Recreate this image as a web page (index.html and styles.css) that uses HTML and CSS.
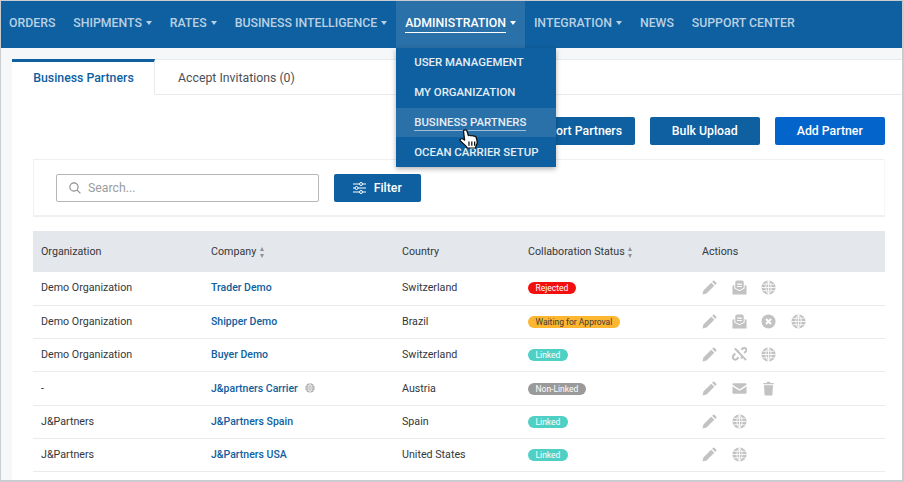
FILE: index.html
```html
<!DOCTYPE html>
<html>

<head>
    <title>Business Partners</title>
    <meta charset="utf-8">
    <link rel="stylesheet" href="styles.css">
</head>

<body>
    <svg class="icon-defs" width="0" height="0">
        <symbol id="i-pencil" viewBox="0 0 16 16">
            <path d="M0.5 15.5l1-4.3 8.3-8.3 3.3 3.3-8.3 8.3zM10.8 1.900l1.200-1.200q.6-.5 1.200 0l2.100 2.100q.5.6 0 1.200l-1.200 1.200z" />
        </symbol>
        <symbol id="i-open-mail" viewBox="0 0 16 16">
            <path d="M0.500 6.500l2-1.400v3.900l5.500 3 5.500-3v-3.900l2 1.400v9h-15z" />
            <path d="M3.500 2.500q0-2 2-2h5q2 0 2 2v6l-4.500 2.500-4.500-2.500zM5.500 3.800v1.200h5v-1.200zM5.500 6.300v1.200h5v-1.200z" fill-rule="evenodd" />
        </symbol>
        <symbol id="i-globe" viewBox="0 0 16 16">
            <circle cx="8" cy="8" r="7.500" />
            <path d="M8 .5v15M.5 8h15M1.800 4.500h12.400M1.800 11.500h12.400M8 .5q-6 7.500 0 15M8 .5q6 7.500 0 15" fill="none" stroke="#fff" stroke-width=".9" />
        </symbol>
        <symbol id="i-cancel" viewBox="0 0 16 16">
            <circle cx="8" cy="8" r="7.500" />
            <path d="M5.300 5.300l5.400 5.400M10.700 5.300l-5.400 5.400" fill="none" stroke="#fff" stroke-width="2" />
        </symbol>
        <symbol id="i-unlink" viewBox="0 0 16 16">
            <path d="M3 1.500l12 12.500M10 3l1.500-1.500q1.500-1 3 0t.5 3l-2 2M3.500 7l-2 2q-1.200 1.700 0 3.500t3.500.5l2-2" fill="none" stroke="currentColor" stroke-width="2.200" />
            <path d="M7 3.500l-1.500 1.500M9.500 12l1.500-1.500" fill="none" stroke="currentColor" stroke-width="2.200" />
        </symbol>
        <symbol id="i-mail" viewBox="0 0 16 16">
            <path d="M0.500 3.500q0-1.200 1.200-1.200h12.600q1.200 0 1.200 1.200v.6l-7.500 4.600-7.500-4.600z" />
            <path d="M0.500 5.800l7.500 4.500 7.500-4.500v6.700q0 1.200-1.200 1.200h-12.600q-1.200 0-1.200-1.200z" />
        </symbol>
        <symbol id="i-trash" viewBox="0 0 12 16">
            <path d="M0.500 2h3.500l.5-1.200h3l.5 1.200h3.500v1.400h-11zM1.200 4.500h9.600l-.6 10q-.1 1-1 1h-6.400q-.9 0-1-1z" />
        </symbol>
    </svg>

    <div class="frame">
        <nav class="topnav">
            <a class="nav-item">ORDERS</a>
            <a class="nav-item has-caret">SHIPMENTS</a>
            <a class="nav-item has-caret">RATES</a>
            <a class="nav-item has-caret">BUSINESS INTELLIGENCE</a>
            <div class="nav-item has-caret active">
                <span class="nav-label">ADMINISTRATION</span>
                <div class="dropdown">
                    <a class="dropdown-item">USER MANAGEMENT</a>
                    <a class="dropdown-item">MY ORGANIZATION</a>
                    <a class="dropdown-item hovered"><span class="nav-label">BUSINESS PARTNERS</span></a>
                    <a class="dropdown-item">OCEAN CARRIER SETUP</a>
                    <svg class="hand-cursor" width="21" height="20" viewBox="0 0 20 24" preserveAspectRatio="none">
                        <path d="M5 1.500q1.500-1 2.500.5l1.500 6q1.500-1 2.500.2 1.500-.7 2.500.5 1.500-.5 2.300 1l1 5q.3 3-1 5l-.5 3h-8l-1-2-5.500-6.500q-.8-1.500.5-2.300 1.200-.5 2.500.5l1 1-1-10.400q-.1-1 .200-1.500z" fill="#fff" stroke="#111" stroke-width="1.300" stroke-linejoin="round" />
                        <path d="M9.500 15v5M12.200 15v5M14.900 15v5" stroke="#111" stroke-width="1.200" />
                    </svg>
                </div>
            </div>
            <a class="nav-item has-caret">INTEGRATION</a>
            <a class="nav-item">NEWS</a>
            <a class="nav-item">SUPPORT CENTER</a>
        </nav>

        <div class="content">
            <div class="tab-bar">
                <div class="tab selected">Business Partners</div>
                <div class="tab">Accept Invitations (0)</div>
            </div>

            <div class="panel">
                <div class="button-row">
                    <button class="btn">Import Partners</button>
                    <button class="btn">Bulk Upload</button>
                    <button class="btn btn-add">Add Partner</button>
                </div>

                <div class="search-card">
                    <div class="search-box">
                        <svg width="12" height="12" viewBox="0 0 14 14" fill="none" stroke="#8a8a8a" stroke-width="1.300">
                            <circle cx="5.800" cy="5.800" r="4.800" />
                            <path d="M9.300 9.300l4 4" />
                        </svg>
                        <span>Search...</span>
                    </div>
                    <button class="btn btn-filter">
                        <svg width="13" height="12" viewBox="0 0 13 12" fill="none" stroke="#fff" stroke-width="1">
                            <path d="M0 2h6.500M9.500 2h3.500M0 6h2M5 6h8M0 10h6.500M9.500 10h3.500" />
                            <circle cx="8" cy="2" r="1.500" />
                            <circle cx="3.500" cy="6" r="1.500" />
                            <circle cx="8" cy="10" r="1.500" />
                        </svg>
                        Filter
                    </button>
                </div>

                <table class="partners">
                    <thead>
                        <tr>
                            <th class="col-org">Organization</th>
                            <th class="col-company">Company <span class="sort"></span></th>
                            <th class="col-country">Country</th>
                            <th class="col-status">Collaboration Status <span class="sort"></span></th>
                            <th>Actions</th>
                        </tr>
                    </thead>
                    <tbody>
                        <tr>
                            <td>Demo Organization</td>
                            <td><a class="company">Trader Demo</a></td>
                            <td>Switzerland</td>
                            <td><span class="badge rejected">Rejected</span></td>
                            <td>
                                <div class="actions">
                                    <svg class="ico"><use href="#i-pencil" /></svg>
                                    <svg class="ico"><use href="#i-open-mail" /></svg>
                                    <svg class="ico"><use href="#i-globe" /></svg>
                                </div>
                            </td>
                        </tr>
                        <tr>
                            <td>Demo Organization</td>
                            <td><a class="company">Shipper Demo</a></td>
                            <td>Brazil</td>
                            <td><span class="badge waiting">Waiting for Approval</span></td>
                            <td>
                                <div class="actions">
                                    <svg class="ico"><use href="#i-pencil" /></svg>
                                    <svg class="ico"><use href="#i-open-mail" /></svg>
                                    <svg class="ico"><use href="#i-cancel" /></svg>
                                    <svg class="ico"><use href="#i-globe" /></svg>
                                </div>
                            </td>
                        </tr>
                        <tr>
                            <td>Demo Organization</td>
                            <td><a class="company">Buyer Demo</a></td>
                            <td>Switzerland</td>
                            <td><span class="badge linked">Linked</span></td>
                            <td>
                                <div class="actions">
                                    <svg class="ico"><use href="#i-pencil" /></svg>
                                    <svg class="ico"><use href="#i-unlink" /></svg>
                                    <svg class="ico"><use href="#i-globe" /></svg>
                                </div>
                            </td>
                        </tr>
                        <tr>
                            <td>-</td>
                            <td><a class="company">J&amp;partners Carrier</a><svg class="ico ico-small"><use href="#i-globe" /></svg></td>
                            <td>Austria</td>
                            <td><span class="badge nonlinked">Non-Linked</span></td>
                            <td>
                                <div class="actions">
                                    <svg class="ico"><use href="#i-pencil" /></svg>
                                    <svg class="ico"><use href="#i-mail" /></svg>
                                    <svg class="ico"><use href="#i-trash" /></svg>
                                </div>
                            </td>
                        </tr>
                        <tr>
                            <td>J&amp;Partners</td>
                            <td><a class="company">J&amp;Partners Spain</a></td>
                            <td>Spain</td>
                            <td><span class="badge linked">Linked</span></td>
                            <td>
                                <div class="actions">
                                    <svg class="ico"><use href="#i-pencil" /></svg>
                                    <svg class="ico"><use href="#i-globe" /></svg>
                                </div>
                            </td>
                        </tr>
                        <tr>
                            <td>J&amp;Partners</td>
                            <td><a class="company">J&amp;Partners USA</a></td>
                            <td>United States</td>
                            <td><span class="badge linked">Linked</span></td>
                            <td>
                                <div class="actions">
                                    <svg class="ico"><use href="#i-pencil" /></svg>
                                    <svg class="ico"><use href="#i-globe" /></svg>
                                </div>
                            </td>
                        </tr>
                    </tbody>
                </table>
            </div>
        </div>
    </div>
</body>

</html>
```

FILE: styles.css
```css
html,
body {
    margin: 0;
    height: 100%;
}

body {
    font-family: Roboto, "Liberation Sans", sans-serif;
    background-color: #fff;
    overflow: hidden;
}

.icon-defs {
    position: absolute;
}

.frame {
    height: 482px;
    box-sizing: border-box;
    border: 1px solid #c9ccd0;
    border-bottom-width: 2px;
    border-right-width: 2px;
    background-color: #f6f7f9;
    overflow: hidden;
}

/* top navigation */
.topnav {
    display: flex;
    height: 47px;
    background-color: #0e60a0;
}

.nav-item {
    position: relative;
    display: flex;
    align-items: center;
    padding: 0 8.95px 4px;
    font-size: 12.3px;
    font-weight: 500;
    color: #b9d0e4;
}

.nav-item:first-child {
    padding-left: 8px;
}

.has-caret::after {
    content: "";
    margin-left: 4px;
    border-left: 3.5px solid transparent;
    border-right: 3.5px solid transparent;
    border-top: 4px solid currentColor;
}

.nav-item.active {
    background-color: #2a70a9;
    color: #fff;
}

.nav-label {
    border-bottom: 1px solid #fff;
    padding-bottom: 2px;
    margin-top: 3px;
}

.dropdown {
    position: absolute;
    z-index: 5;
    top: 47px;
    left: 0;
    width: 160px;
    background-color: #0e60a0;
    box-shadow: 0 2px 5px rgba(0, 0, 0, 0.3);
}

.dropdown-item {
    display: flex;
    align-items: center;
    box-sizing: border-box;
    height: 29.8px;
    padding: 0 0 1px 18px;
    font-size: 11.4px;
    color: #e6eef5;
    white-space: nowrap;
}

.dropdown-item.hovered {
    background-color: #2a70a9;
}

.dropdown-item .nav-label {
    border-bottom-color: #9dbdd8;
    padding-bottom: 1px;
    margin-top: 2px;
}

.hand-cursor {
    position: absolute;
    left: 63px;
    top: 81px;
}

/* tabs */
.content {
    margin-left: 11px;
    padding-top: 11px;
}

.tab-bar {
    display: flex;
    height: 36px;
    box-sizing: border-box;
    background-color: #fff;
    border-top: 1px solid #e8eaed;
    border-bottom: 1px solid #e8eaed;
}

.tab {
    display: flex;
    align-items: center;
    height: 35px;
    padding: 0 22px 0 23px;
    font-size: 12.3px;
    color: #4a4f55;
}

.tab.selected {
    box-sizing: border-box;
    width: 143px;
    height: 36px;
    margin-top: -1px;
    justify-content: center;
    padding: 0 0 0 1px;
    border-top: 3px solid #0e60a0;
    border-right: 1px solid #e8eaed;
    border-bottom: 1px solid #fff;
    background-color: #fff;
    color: #0e60a0;
    font-weight: 500;
}

.panel {
    height: 386px;
    padding: 22px 17px 0 21px;
    background-color: #fff;
}

.button-row {
    display: flex;
    justify-content: flex-end;
    gap: 14.5px;
}

button {
    font-family: inherit;
}

.btn {
    height: 28px;
    padding: 0 13px;
    border: none;
    border-radius: 2px;
    background-color: #0e60a0;
    color: #fff;
    font-size: 12.3px;
    font-weight: 500;
}

.button-row .btn:nth-child(2),
.btn-add {
    width: 110.5px;
}

.btn-add {
    background-color: #0364cc;
}

/* search */
.search-card {
    display: flex;
    align-items: center;
    gap: 14.5px;
    height: 58px;
    box-sizing: border-box;
    margin-top: 14px;
    padding-left: 22px;
    border: 1px solid #eef0f2;
    border-right-color: #f6f7f8;
    border-bottom-width: 2px;
}

.search-box {
    display: flex;
    align-items: center;
    gap: 7px;
    box-sizing: border-box;
    width: 263px;
    height: 28px;
    padding-left: 12px;
    border: 1px solid #b4b6b8;
    border-radius: 2px;
    font-size: 12.3px;
    color: #9a9da0;
}

.btn-filter {
    display: flex;
    align-items: center;
    justify-content: center;
    gap: 8px;
    width: 87.5px;
    padding: 0;
}

/* table */
.partners {
    width: 852px;
    margin-top: 14px;
    table-layout: fixed;
    border-collapse: collapse;
    font-size: 10.7px;
    color: #33373b;
}

.partners th {
    height: 41px;
    padding: 0 0 0 8px;
    background-color: #e4e7eb;
    font-weight: 400;
    text-align: left;
}

.partners td {
    height: 33.3px;
    box-sizing: border-box;
    padding: 0 0 1px 8px;
    border-bottom: 1px solid #e9ebee;
}

.col-org {
    width: 170px;
    box-sizing: border-box;
}

.col-company {
    width: 191px;
    box-sizing: border-box;
}

.col-country {
    width: 126px;
    box-sizing: border-box;
}

.col-status {
    width: 174px;
    box-sizing: border-box;
}

.sort {
    display: inline-flex;
    flex-direction: column;
    gap: 3px;
    margin-left: 1px;
    vertical-align: middle;
}

.sort::before,
.sort::after {
    content: "";
    border-left: 2.5px solid transparent;
    border-right: 2.5px solid transparent;
}

.sort::before {
    border-bottom: 4px solid #8d9297;
}

.sort::after {
    border-top: 4px solid #8d9297;
}

.company {
    color: #0e60a0;
    font-size: 10.5px;
    font-weight: 500;
}

.badge {
    display: inline-block;
    height: 12px;
    line-height: 12px;
    padding: 0 7.5px;
    border-radius: 6px;
    font-size: 8.5px;
    color: #fff;
    vertical-align: middle;
}

.badge.rejected {
    background-color: #f40f0f;
}

.badge.waiting {
    background-color: #fdb62f;
    color: #3b3b3b;
}

.badge.linked {
    background-color: #4fd0c4;
}

.badge.nonlinked {
    background-color: #9a9a9a;
}

.actions {
    display: flex;
    align-items: center;
    gap: 14.5px;
}

.ico {
    width: 15px;
    height: 15px;
    fill: #c2c2c2;
    color: #c2c2c2;
}

.ico-small {
    width: 10px;
    height: 10px;
    margin-left: 7px;
    vertical-align: -1px;
    fill: #a6a6a6;
}
```
